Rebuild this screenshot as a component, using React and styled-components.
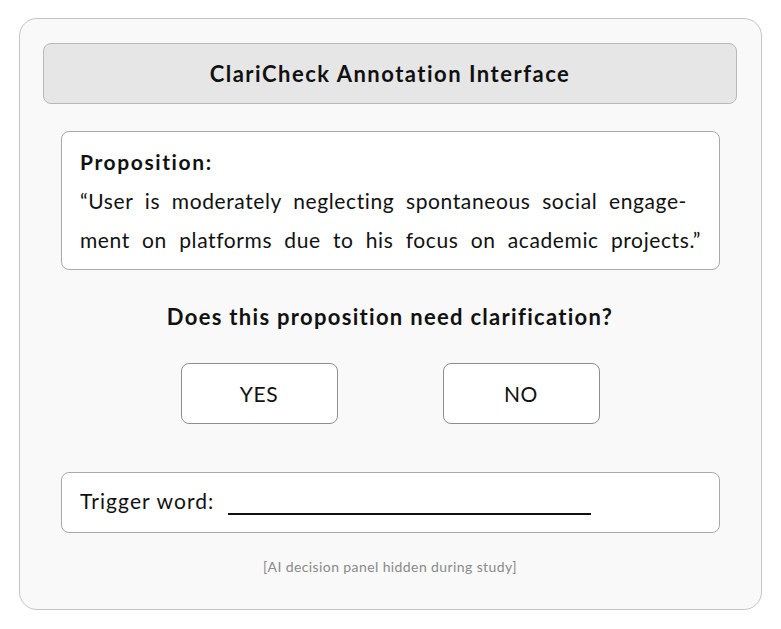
import styled, { createGlobalStyle } from "styled-components";

const GlobalStyle = createGlobalStyle`
  body {
    margin: 0;
    background: #ffffff;
    font-family: "Lato", "Noto Sans", sans-serif;
    color: #111;
  }
`;

const Page = styled.div`
  padding: 18px 0 0 19px;
`;

const Card = styled.div`
  width: 743px;
  height: 592px;
  box-sizing: border-box;
  background: #f9f9f9;
  border: 1px solid #c4c4c4;
  border-radius: 18px;
  padding: 24px 24px 0 23px;
  display: flex;
  flex-direction: column;
`;

const Header = styled.div`
  height: 61px;
  box-sizing: border-box;
  background: #e6e6e6;
  border: 1px solid #b9b9b9;
  border-radius: 8px;
  display: flex;
  align-items: center;
  justify-content: center;
  font-weight: 700;
  font-size: 22px;
  letter-spacing: 1.5px;
`;

const Panel = styled.div`
  margin: ${(p) => p.top}px 17px 0 18px;
  background: #fff;
  border: 1px solid #a9a9a9;
  border-radius: 8px;
  box-sizing: border-box;
  height: ${(p) => p.h}px;
  padding: ${(p) => p.pad};
`;

const Label = styled.div`
  font-weight: 700;
  font-size: 21px;
  line-height: 24px;
  letter-spacing: 1.6px;
  margin-bottom: 7px;
`;

const Line = styled.div`
  font-size: 21px;
  line-height: 39px;
  text-align: justify;
  text-align-last: justify;
  letter-spacing: 0.6px;
  margin-right: ${(p) => (p.hyphen ? 14 : 0)}px;
`;

const Question = styled.div`
  margin-top: 35px;
  text-align: center;
  font-weight: 700;
  font-size: 22px;
  line-height: 24px;
  letter-spacing: 1.3px;
`;

const Choices = styled.div`
  margin-top: 34px;
  display: flex;
  justify-content: center;
  gap: 105px;
`;

const Choice = styled.button`
  width: 157px;
  height: 61px;
  background: #fff;
  border: 1px solid #8e8e8e;
  border-radius: 8px;
  font-family: inherit;
  font-size: 21px;
  letter-spacing: 0.6px;
  color: #111;
  cursor: pointer;
`;

const Trigger = styled.div`
  display: flex;
  align-items: center;
  height: 100%;
  font-size: 21px;
  letter-spacing: 1.1px;
  padding-bottom: 4px;
  box-sizing: border-box;
`;

const Blank = styled.span`
  display: inline-block;
  width: 363px;
  height: 26px;
  margin-left: 14px;
  border-bottom: 2px solid #111;
`;

const Note = styled.div`
  margin-top: 25px;
  text-align: center;
  font-size: 14px;
  letter-spacing: 0.4px;
  color: #8a8a8a;
`;

export default function App() {
  return (
    <>
      <GlobalStyle />
      <Page>
        <Card>
          <Header>ClariCheck Annotation Interface</Header>
          <Panel top={27} h={139} pad="18px 18px 0 18px">
            <Label>Proposition:</Label>
            <Line hyphen>“User is moderately neglecting spontaneous social engage-</Line>
            <Line>ment on platforms due to his focus on academic projects.”</Line>
          </Panel>
          <Question>Does this proposition need clarification?</Question>
          <Choices>
            <Choice>YES</Choice>
            <Choice>NO</Choice>
          </Choices>
          <Panel top={48} h={61} pad="0 18px">
            <Trigger>
              Trigger word:
              <Blank />
            </Trigger>
          </Panel>
          <Note>[AI decision panel hidden during study]</Note>
        </Card>
      </Page>
    </>
  );
}
